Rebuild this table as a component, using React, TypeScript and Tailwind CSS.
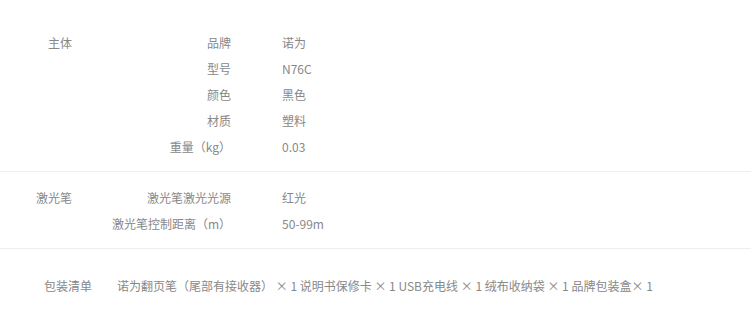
const groups = [
  {
    title: "主体",
    rows: [
      ["品牌", "诺为"],
      ["型号", "N76C"],
      ["颜色", "黑色"],
      ["材质", "塑料"],
      ["重量（kg）", "0.03"],
    ],
  },
  {
    title: "激光笔",
    rows: [
      ["激光笔激光光源", "红光"],
      ["激光笔控制距离（m）", "50-99m"],
    ],
  },
];

export default function App() {
  return (
    <div
      className="w-[751px] h-[312px] bg-white text-[12px] text-[#888] overflow-hidden"
      style={{ fontFamily: '"Noto Sans CJK SC", "Noto Sans", sans-serif' }}
    >
      <div className="pt-[17px]">
        {groups.map((g) => (
          <div key={g.title} className="flex pt-[13px] pb-[11px] border-b border-[#eee]">
            <div className="w-[72px] shrink-0 text-right leading-[26px]">{g.title}</div>
            <div className="flex flex-col">
              {g.rows.map(([k, v]) => (
                <div key={k} className="flex leading-[26px]">
                  <div className="w-[159px] text-right">{k}</div>
                  <div className="pl-[51px]">{v}</div>
                </div>
              ))}
            </div>
          </div>
        ))}
        <div className="flex pl-[44px] pt-[24px] leading-[26px]">
          <div className="w-[48px]">包装清单</div>
          <div className="pl-[25px] whitespace-nowrap">
            诺为翻页笔（尾部有接收器） × 1 说明书保修卡 × 1 USB充电线 × 1 绒布收纳袋 × 1 品牌包装盒× 1
          </div>
        </div>
      </div>
    </div>
  );
}
